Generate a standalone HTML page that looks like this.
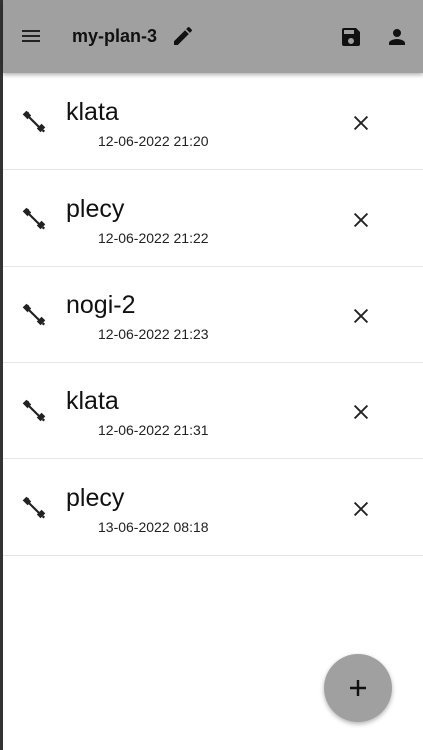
<!DOCTYPE html>
<html><head><style>
body{margin:0;width:423px;height:750px;overflow:hidden;background:#fff;font-family:"Liberation Sans",sans-serif;position:relative}
.edge{position:absolute;left:0;top:0;width:3px;height:750px;background:#333}
.hdr{position:absolute;left:3px;top:0;right:0;height:73px;background:#a0a0a0;box-shadow:0 2px 4px rgba(0,0,0,.3)}
.row{position:absolute;left:3px;right:0;height:96px;border-bottom:1.5px solid #e4e4e4}
.t{position:absolute;left:63px;top:25px;font-size:25px;color:#111}
.d{position:absolute;left:95px;top:60px;font-size:14px;color:#222}
.ic{position:absolute;left:18px;top:36px}
.x{position:absolute;left:347px;top:39px}
.fab{position:absolute;left:324px;top:654px;width:68px;height:68px;border-radius:50%;background:#a0a0a0;box-shadow:0 2px 5px rgba(0,0,0,.3)}
</style></head><body>
<div class="edge"></div>
<div class="hdr">
<svg style="position:absolute;left:16px;top:24px" width="24" height="24" viewBox="0 0 24 24"><path d="M3 18h18v-2H3v2zm0-5h18v-2H3v2zm0-7v2h18V6H3z" fill="#222"/></svg>
<div style="position:absolute;left:69px;top:26px;font-size:18px;font-weight:bold;color:#111">my-plan-3</div>
<svg style="position:absolute;left:168px;top:24px" width="24" height="24" viewBox="0 0 24 24"><path d="M3 17.25V21h3.75L17.81 9.94l-3.75-3.75L3 17.25zM20.71 7.04a1 1 0 000-1.41l-2.34-2.34a1 1 0 00-1.41 0l-1.83 1.83 3.75 3.75 1.83-1.83z" fill="#111"/></svg>
<svg style="position:absolute;left:336px;top:25px" width="24" height="24" viewBox="0 0 24 24"><path d="M17 3H5a2 2 0 00-2 2v14a2 2 0 002 2h14a2 2 0 002-2V7l-4-4zm-5 16a3 3 0 110-6 3 3 0 010 6zm3-10H5V5h10v4z" fill="#111"/></svg>
<svg style="position:absolute;left:382px;top:25px" width="24" height="24" viewBox="0 0 24 24"><path d="M12 12a4 4 0 100-8 4 4 0 000 8zm0 2c-2.67 0-8 1.34-8 4v2h16v-2c0-2.66-5.33-4-8-4z" fill="#111"/></svg>
</div>
<div class="row" style="top:73px"><svg class="ic" width="26" height="26" viewBox="0 0 24 24"><path d="M4 6l3-3M5 3l-2 2 3 3 2-2zM7 7l10 10M16 18l2 2 3-3-2-2zM20 21l1.5-1.5" stroke="#222" stroke-width="2" fill="#222"/></svg><div class="t">klata</div><div class="d">12-06-2022 21:20</div><svg class="x" width="22" height="22" viewBox="0 0 24 24"><path d="M5 5l14 14M19 5L5 19" stroke="#222" stroke-width="2"/></svg></div>
<div class="row" style="top:170px"><svg class="ic" width="26" height="26" viewBox="0 0 24 24"><path d="M4 6l3-3M5 3l-2 2 3 3 2-2zM7 7l10 10M16 18l2 2 3-3-2-2zM20 21l1.5-1.5" stroke="#222" stroke-width="2" fill="#222"/></svg><div class="t">plecy</div><div class="d">12-06-2022 21:22</div><svg class="x" width="22" height="22" viewBox="0 0 24 24"><path d="M5 5l14 14M19 5L5 19" stroke="#222" stroke-width="2"/></svg></div>
<div class="row" style="top:266px"><svg class="ic" width="26" height="26" viewBox="0 0 24 24"><path d="M4 6l3-3M5 3l-2 2 3 3 2-2zM7 7l10 10M16 18l2 2 3-3-2-2zM20 21l1.5-1.5" stroke="#222" stroke-width="2" fill="#222"/></svg><div class="t">nogi-2</div><div class="d">12-06-2022 21:23</div><svg class="x" width="22" height="22" viewBox="0 0 24 24"><path d="M5 5l14 14M19 5L5 19" stroke="#222" stroke-width="2"/></svg></div>
<div class="row" style="top:362px"><svg class="ic" width="26" height="26" viewBox="0 0 24 24"><path d="M4 6l3-3M5 3l-2 2 3 3 2-2zM7 7l10 10M16 18l2 2 3-3-2-2zM20 21l1.5-1.5" stroke="#222" stroke-width="2" fill="#222"/></svg><div class="t">klata</div><div class="d">12-06-2022 21:31</div><svg class="x" width="22" height="22" viewBox="0 0 24 24"><path d="M5 5l14 14M19 5L5 19" stroke="#222" stroke-width="2"/></svg></div>
<div class="row" style="top:459px"><svg class="ic" width="26" height="26" viewBox="0 0 24 24"><path d="M4 6l3-3M5 3l-2 2 3 3 2-2zM7 7l10 10M16 18l2 2 3-3-2-2zM20 21l1.5-1.5" stroke="#222" stroke-width="2" fill="#222"/></svg><div class="t">plecy</div><div class="d">13-06-2022 08:18</div><svg class="x" width="22" height="22" viewBox="0 0 24 24"><path d="M5 5l14 14M19 5L5 19" stroke="#222" stroke-width="2"/></svg></div>
<div class="fab"><svg style="position:absolute;left:22px;top:22px" width="24" height="24" viewBox="0 0 24 24"><path d="M12 4v16M4 12h16" stroke="#111" stroke-width="2.4"/></svg></div>
</body></html>
